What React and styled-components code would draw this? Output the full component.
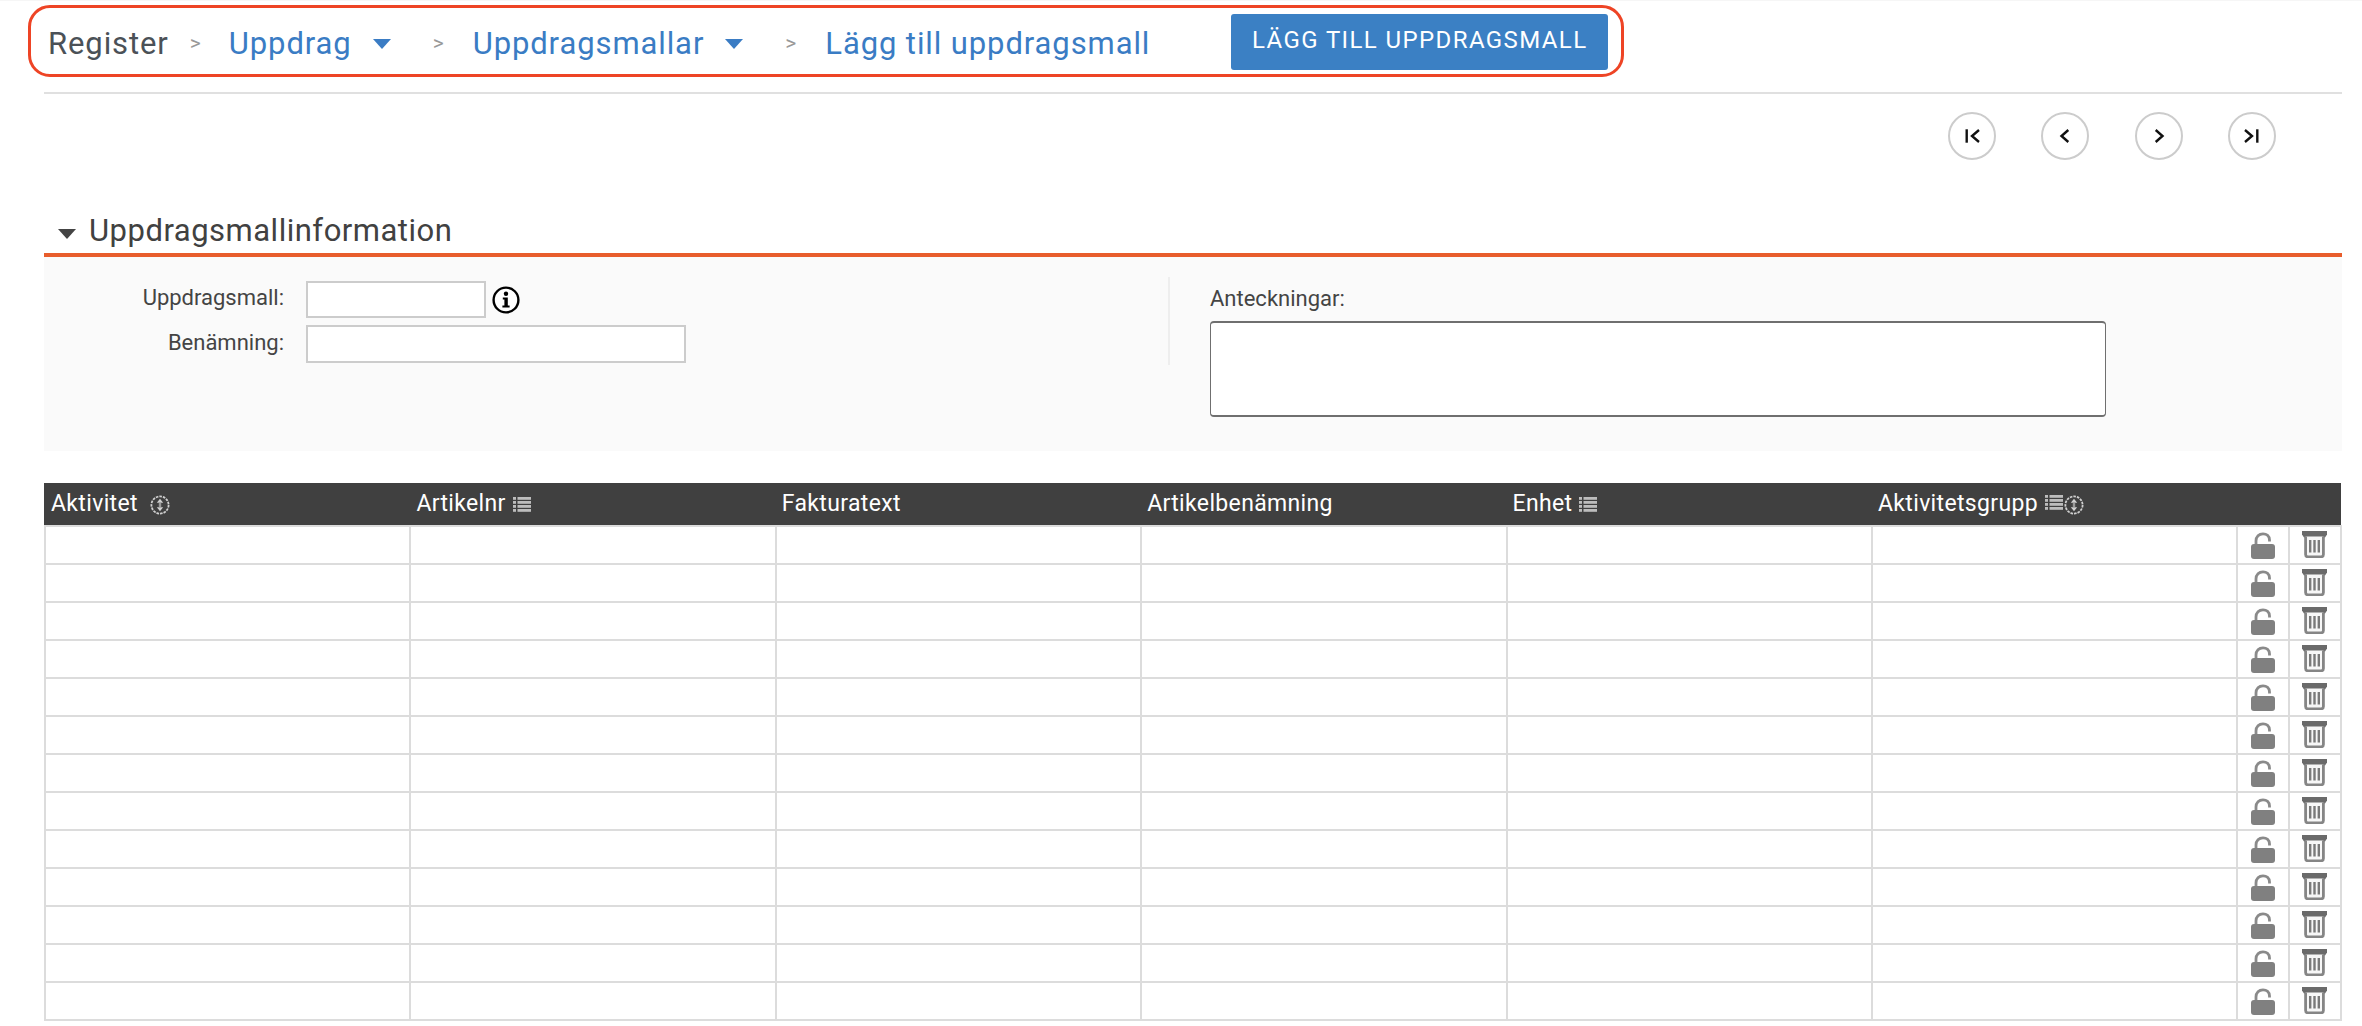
import React from "react";
import styled, { createGlobalStyle } from "styled-components";

const Global = createGlobalStyle`
  html, body { margin: 0; padding: 0; background: #fff; }
  body { font-family: Roboto, "Liberation Sans", sans-serif; }
  * { box-sizing: border-box; }
`;

const Page = styled.div`
  width: 2362px;
  height: 1026px;
  overflow: hidden;
  border-top: 1px solid #f6f6f6;
  padding: 4px 20px 0 28px;
`;

const Breadcrumb = styled.nav`
  width: 1596px;
  height: 72px;
  border: 3px solid #ee4425;
  border-radius: 22px;
  display: flex;
  align-items: center;
  padding-left: 17px;
  font-size: 31px;
  letter-spacing: 0.9px;
`;

const Crumb = styled.span`
  color: ${(p) => (p.$link ? "#3a7cc4" : "#4b5157")};
  margin-left: ${(p) => p.$left || 0}px;
  white-space: nowrap;
  position: relative;
  top: 2px;
`;

const Sep = styled.span`
  color: #999;
  font-size: 21px;
  margin-left: ${(p) => p.$left}px;
  letter-spacing: 0;
  position: relative;
  top: 2px;
`;

const Caret = styled.span`
  width: 0;
  height: 0;
  margin-left: ${(p) => p.$left}px;
  border-left: 9px solid transparent;
  border-right: 9px solid transparent;
  border-top: 10px solid ${(p) => p.$color || "#3a7cc4"};
  position: relative;
  top: 3px;
`;

const PrimaryButton = styled.button`
  margin: 2px 0 0 81px;
  width: 377px;
  height: 56px;
  background: #3b80c4;
  color: #fff;
  border: 0;
  border-radius: 3px;
  font-family: inherit;
  font-size: 24px;
  letter-spacing: 1.4px;
  padding: 0 0 4px;
  white-space: nowrap;
`;

const Content = styled.main`
  margin-left: 16px;
`;

const HeadRule = styled.div`
  height: 2px;
  margin-top: 15px;
  background: #e0e0e0;
`;

const Pager = styled.div`
  display: flex;
  justify-content: flex-end;
  gap: 45.3px;
  margin-top: 18px;
  padding-right: 66px;
`;

const PagerButton = styled.button`
  width: 48px;
  height: 48px;
  padding: 0;
  border: 2px solid #ccc;
  border-radius: 50%;
  background: #fff;
  display: flex;
  align-items: center;
  justify-content: center;
`;

const SectionTitle = styled.h2`
  margin: 52px 0 3px;
  height: 38px;
  display: flex;
  align-items: center;
  gap: 13px;
  padding-left: 14px;
  font-weight: 400;
  font-size: 31px;
  letter-spacing: 0.5px;
  color: #414141;
  line-height: 38px;
`;

const OrangeRule = styled.div`
  height: 4px;
  background: #e85d2c;
`;

const Panel = styled.section`
  height: 194px;
  background: #fafafa;
  display: flex;
  align-items: flex-start;
`;

const FormColumn = styled.div`
  width: 1124px;
  padding-top: 24px;
  display: flex;
  flex-direction: column;
  gap: 7px;
`;

const FormRow = styled.div`
  display: flex;
  align-items: center;
`;

const Label = styled.label`
  width: 240px;
  text-align: right;
  margin-right: 22px;
  font-size: 22px;
  color: #444;
  position: relative;
  top: -2px;
`;

const TextInput = styled.input`
  width: ${(p) => p.$width}px;
  height: ${(p) => p.$height}px;
  border: 2px solid #ccc;
  background: #fff;
  padding: 0;
  outline: none;
`;

const InfoWrap = styled.span`
  display: flex;
  margin-left: 6px;
`;

const Divider = styled.div`
  width: 2px;
  height: 88px;
  margin-top: 20px;
  background: #eeeeee;
`;

const NotesColumn = styled.div`
  margin-left: 40px;
  padding-top: 28px;
`;

const NotesLabel = styled.div`
  font-size: 22px;
  line-height: 28px;
  color: #444;
  margin-bottom: 8px;
`;

const Notes = styled.textarea`
  display: block;
  width: 896px;
  height: 96px;
  border-style: solid;
  border-width: 2px 1px;
  border-color: #6f6f6f;
  border-radius: 4px;
  background: #fff;
  padding: 0;
  resize: none;
  outline: none;
`;

const Table = styled.div`
  margin-top: 32px;
  width: 2298px;
`;

const columns = "repeat(6, 365.4px) 51.6px 1fr";

const HeaderRow = styled.div`
  display: grid;
  grid-template-columns: ${columns};
  height: 42px;
  background: #404040;
  width: 2297px;
`;

const HeaderCell = styled.div`
  display: flex;
  align-items: center;
  gap: ${(p) => p.$gap ?? 7}px;
  padding-left: 7px;
  padding-bottom: 1px;
  color: #fff;
  font-size: 23px;
  letter-spacing: 0.35px;
  white-space: nowrap;
`;

const HeaderIcons = styled.span`
  display: flex;
  gap: 1px;
  position: relative;
  top: 1px;
`;

const Row = styled.div`
  display: grid;
  grid-template-columns: ${columns};
  height: 38px;
  border-top: 2px solid #dcdcdc;
  border-right: 2px solid #dcdcdc;
  &:last-child { height: 40px; border-bottom: 2px solid #dcdcdc; }
`;

const Cell = styled.div`
  border-left: 2px solid #dcdcdc;
  display: flex;
  justify-content: center;
`;

const IconSlot = styled.span`
  display: block;
  margin-top: ${(p) => p.$top}px;
`;

const SortIcon = () => (
  <svg width="20" height="20" viewBox="0 0 20 20" fill="none" style={{ flex: "none" }}>
    <circle cx="10" cy="10" r="8.6" stroke="#cfcfcf" strokeWidth="1.8" strokeDasharray="2.600 1" />
    <path d="M10 3.800 13.200 7.800H6.800Z M10 16.200 6.800 12.200H13.200Z" fill="#d0d0d0" />
    <rect x="8.800" y="7.800" width="2.400" height="4.400" fill="#999" />
  </svg>
);

const ListIcon = () => (
  <svg width="18" height="15" viewBox="0 0 18 15" fill="#bdbdbd" style={{ flex: "none" }}>
    {[0, 4, 8, 12].map((y) => (
      <React.Fragment key={y}>
        <rect x="0" y={y} width="3" height="2.800" />
        <rect x="4.500" y={y} width="13.500" height="2.800" />
      </React.Fragment>
    ))}
  </svg>
);

const InfoIcon = () => (
  <svg width="28" height="28" viewBox="0 0 28 28" fill="none">
    <circle cx="14" cy="14" r="12.400" fill="#fff" stroke="#000" strokeWidth="2.400" />
    <circle cx="14" cy="7.800" r="2.200" fill="#000" />
    <path d="M10.800 11.500H15.800V19.400H17.600V21.400H10.400V19.400H12.400V13.500H10.800Z" fill="#000" />
  </svg>
);

const LockIcon = () => (
  <svg width="24" height="27" viewBox="0 0 24 27" fill="none">
    <path d="M5 13V9C5 4.500 8 1.800 12 1.800C15.500 1.800 18.500 4 18.500 8V9.500" stroke="#8a8a8a" strokeWidth="2.800" fill="none" />
    <path d="M0 15C0 13 1 12 3 12H21C23 12 24 13 24 15V24C24 26 23 27 21 27H3C1 27 0 26 0 24Z" fill="#808080" />
  </svg>
);

const TrashIcon = () => (
  <svg width="25" height="27" viewBox="0 0 25 27" fill="none">
    <path d="M0 0H25V3.500L23 6.500H2L0 3.500Z" fill="#6a6a6a" />
    <path d="M3.600 5.500V23.500C3.600 25 4.500 25.800 6 25.800H19C20.500 25.800 21.400 25 21.400 23.500V5.500" stroke="#858585" strokeWidth="2.800" fill="#f7f7f7" />
    <rect x="7" y="9" width="2.400" height="12.500" fill="#7a7a7a" />
    <rect x="11.300" y="9" width="2.400" height="12.500" fill="#7a7a7a" />
    <rect x="15.600" y="9" width="2.400" height="12.500" fill="#7a7a7a" />
  </svg>
);

const pagerPaths = {
  first: ["M6.700 5.300V18.700", "M19 6 12 12 19 18"],
  prev: ["M15.300 6 8.500 12 15.300 18"],
  next: ["M8.700 6 15.500 12 8.700 18"],
  last: ["M17.300 5.300V18.700", "M5 6 12 12 5 18"],
};

const PagerIcon = ({ kind }) => (
  <svg width="24" height="24" viewBox="0 0 24 24" fill="none" stroke="#111" strokeWidth="2.400">
    {pagerPaths[kind].map((d) => (
      <path key={d} d={d} />
    ))}
  </svg>
);

const headers = [
  { text: "Aktivitet", sort: true, gap: 12 },
  { text: "Artikelnr", list: true },
  { text: "Fakturatext" },
  { text: "Artikelbenämning" },
  { text: "Enhet", list: true },
  { text: "Aktivitetsgrupp", list: true, sort: true },
];

const rows = Array.from({ length: 13 }, (_, i) => i);
const blanks = [0, 1, 2, 3, 4, 5];

export default function App() {
  return (
    <Page>
      <Global />
      <Breadcrumb>
        <Crumb>Register</Crumb>
        <Sep $left={21}>&gt;</Sep>
        <Crumb $link $left={28}>Uppdrag</Crumb>
        <Caret $left={21} />
        <Sep $left={42}>&gt;</Sep>
        <Crumb $link $left={29}>Uppdragsmallar</Crumb>
        <Caret $left={21} />
        <Sep $left={42}>&gt;</Sep>
        <Crumb $link $left={29}>Lägg till uppdragsmall</Crumb>
        <PrimaryButton>LÄGG TILL UPPDRAGSMALL</PrimaryButton>
      </Breadcrumb>
      <Content>
        <HeadRule />
        <Pager>
          {["first", "prev", "next", "last"].map((k) => (
            <PagerButton key={k}>
              <PagerIcon kind={k} />
            </PagerButton>
          ))}
        </Pager>
        <SectionTitle>
          <Caret $left={0} $color="#444" />
          Uppdragsmallinformation
        </SectionTitle>
        <OrangeRule />
        <Panel>
          <FormColumn>
            <FormRow>
              <Label>Uppdragsmall:</Label>
              <TextInput $width={180} $height={37} />
              <InfoWrap>
                <InfoIcon />
              </InfoWrap>
            </FormRow>
            <FormRow>
              <Label>Benämning:</Label>
              <TextInput $width={380} $height={38} />
            </FormRow>
          </FormColumn>
          <Divider />
          <NotesColumn>
            <NotesLabel>Anteckningar:</NotesLabel>
            <Notes />
          </NotesColumn>
        </Panel>
        <Table>
          <HeaderRow>
            {headers.map((h) => (
              <HeaderCell key={h.text} $gap={h.gap}>
                {h.text}
                <HeaderIcons>
                  {h.list && <ListIcon />}
                  {h.sort && <SortIcon />}
                </HeaderIcons>
              </HeaderCell>
            ))}
          </HeaderRow>
          {rows.map((r) => (
            <Row key={r}>
              {blanks.map((c) => (
                <Cell key={c} />
              ))}
              <Cell>
                <IconSlot $top={5}>
                  <LockIcon />
                </IconSlot>
              </Cell>
              <Cell>
                <IconSlot $top={4}>
                  <TrashIcon />
                </IconSlot>
              </Cell>
            </Row>
          ))}
        </Table>
      </Content>
    </Page>
  );
}
